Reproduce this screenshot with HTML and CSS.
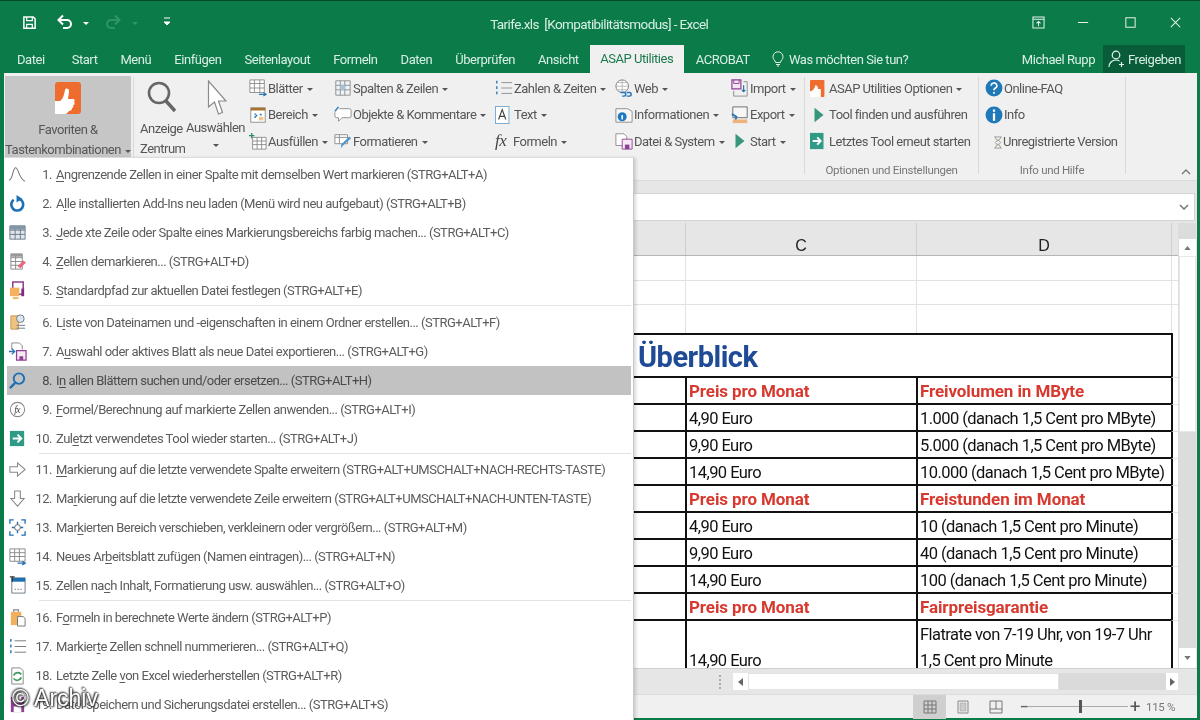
FILE: index.html
```html
<!DOCTYPE html>
<html lang="de">
<head>
<meta charset="utf-8">
<title>Tarife.xls - Excel</title>
<link rel="stylesheet" href="styles.css">
</head>
<body>
<div class="app">
  <header class="titlebar">
    <div class="qat">
      <svg class="qi save" viewBox="0 0 16 16"><path d="M2 2h10l2 2v10H2z" fill="none" stroke="#fff" stroke-width="1.600"/><path d="M5 2v4h6V2" fill="none" stroke="#fff" stroke-width="1.300"/><path d="M5 14v-4h6v4" fill="none" stroke="#fff" stroke-width="1.300"/></svg>
      <svg class="qi undo" viewBox="0 0 18 16"><path d="M3 6h8a4 4 0 0 1 0 8H7" fill="none" stroke="#fff" stroke-width="2"/><path d="M7 1.500 2.500 6 7 10.500" fill="none" stroke="#fff" stroke-width="2"/></svg>
      <span class="caret white"></span>
      <svg class="qi redo" viewBox="0 0 18 16"><path d="M15 6H7a4 4 0 0 0 0 8h4" fill="none" stroke="#2f9468" stroke-width="2"/><path d="M11 1.500 15.500 6 11 10.500" fill="none" stroke="#2f9468" stroke-width="2"/></svg>
      <span class="caret dim"></span>
      <svg class="qi more" viewBox="0 0 8 10"><path d="M1 1h6M1 5h6l-3 3z" fill="#fff" stroke="#fff"/></svg>
    </div>
    <div class="doc">Tarife.xls&nbsp; [Kompatibilitätsmodus] - Excel</div>
    <div class="win">
      <svg class="wi w1" viewBox="0 0 14 14"><path d="M1 1h12v12H1zM1 3.500h12M7 11V6M4.800 8 7 5.800 9.200 8" fill="none" stroke="#e4f2ea" stroke-width="1.100"/></svg>
      <svg class="wi w2" viewBox="0 0 14 14"><path d="M1 7h11" stroke="#e4f2ea" stroke-width="1.100"/></svg>
      <svg class="wi w3" viewBox="0 0 14 14"><path d="M2 2h10v10H2z" fill="none" stroke="#e4f2ea" stroke-width="1.100"/></svg>
      <svg class="wi w4" viewBox="0 0 14 14"><path d="M2 2l10 10M12 2 2 12" stroke="#e4f2ea" stroke-width="1.100"/></svg>
    </div>
  </header>
  <nav class="tabs">
    <span class="tab t-datei">Datei</span>
    <span class="tab">Start</span>
    <span class="tab">Menü</span>
    <span class="tab">Einfügen</span>
    <span class="tab">Seitenlayout</span>
    <span class="tab">Formeln</span>
    <span class="tab">Daten</span>
    <span class="tab">Überprüfen</span>
    <span class="tab t-ansicht">Ansicht</span>
    <span class="tab active">ASAP Utilities</span>
    <span class="tab t-acro">ACROBAT</span>
    <span class="tell">
      <svg class="bulb" viewBox="0 0 12 16"><path d="M3.500 11.500C3 9 1 8.500 1 5.800a5 5 0 0 1 10 0c0 2.700-2 3.200-2.500 5.700zM4 13.500h4M5 15h2" fill="none" stroke="#e4f2ea" stroke-width="1"/></svg>
      Was möchten Sie tun?
    </span>
    <span class="user">Michael Rupp</span>
    <span class="share">
      <svg class="shi" viewBox="0 0 18 18"><circle cx="8" cy="5" r="3.800" fill="none" stroke="#e4f2ea" stroke-width="1.200"/><path d="M1 17c0-4 3-7 7-7 1.500 0 2.500.4 3.500 1M13.500 12v5M11 14.500h5" fill="none" stroke="#e4f2ea" stroke-width="1.200"/></svg>
      Freigeben
    </span>
  </nav>

  <section class="ribbon">
    <div class="fav">
      <svg class="fav-ic" viewBox="0 0 26 32"><rect width="26" height="32" rx="3" fill="#ee6c2d"/><path d="M0 32V19h5c3-2 4-6 5-11 .5-2 4-2 4 1 0 3-1 6-1 8h5c2 0 2 2 1 3 1 1 1 3-1 3 1 1 0 3-1 3 0 2-1 3-3 3l-3 3H0z" fill="#fff"/></svg>
      <span class="big-l">Favoriten &amp;</span>
      <span class="big-l">Tastenkombinationen<i class="caret"></i></span>
    </div>
    <div class="rsep"></div>
    <div class="group g-main">
      <div class="bigbtn b-anz">
        <svg class="mag" viewBox="0 0 30 32"><circle cx="12" cy="12" r="10" fill="none" stroke="#666" stroke-width="2.600"/><path d="M19 20l9 10" stroke="#666" stroke-width="3.400"/></svg>
        <span class="big-l">Anzeige</span><span class="big-l">Zentrum</span>
      </div>
      <div class="bigbtn b-aus">
        <svg class="cur" viewBox="0 0 20 36"><path d="M1.500 1v26l6-5 4 12 4-1.500-4-11.500H19z" fill="#fff" stroke="#8a8a8a" stroke-width="1.200"/></svg>
        <span class="big-l">Auswählen</span><i class="caret solo"></i>
      </div>
      <div class="rcol c1">
        <div class="ri"><svg class="ic" viewBox="0 0 20 20"><path d="M1 1h16v14H1zM1 5h16M1 10h16M6 1v14M12 1v14" fill="#fff" stroke="#8a8a8a"/><path d="M11 17h8M16 15l3 2-3 2" fill="none" stroke="#2b78b5" stroke-width="1.400"/></svg>Blätter<i class="caret"></i></div>
        <div class="ri"><svg class="ic" viewBox="0 0 20 20"><rect x="2" y="2" width="16" height="16" fill="#fff" stroke="#8a8a8a"/><path d="M2 2h16v3H2z" fill="#a9722d"/><path d="M6 13l3-3M12 9l2 1M6 9h2" stroke="#2b78b5" stroke-width="1.600"/><path d="M11 12h5v4h-5z" fill="#f0c68d"/></svg>Bereich<i class="caret"></i></div>
        <div class="ri"><svg class="ic" viewBox="0 0 20 20"><path d="M4 6h15v13H4zM4 10h15M4 14h15M9 6v13M14 6v13" fill="#fff" stroke="#8a8a8a"/><path d="M3 1v6M0 4h6" stroke="#2a8f62" stroke-width="1.500"/></svg>Ausfüllen<i class="caret"></i></div>
      </div>
      <div class="rcol c2">
        <div class="ri"><svg class="ic" viewBox="0 0 20 20"><path d="M2 2h16v16H2zM2 7h16M2 12h16M7 2v16M12 2v16" fill="#eef3f8" stroke="#8a8a8a"/><path d="M7 7h5v5H7z" fill="#a8c3dd"/></svg>Spalten &amp; Zeilen<i class="caret"></i></div>
        <div class="ri"><svg class="ic" viewBox="0 0 20 20"><path d="M6 3h11a2 2 0 0 1 2 2v6a2 2 0 0 1-2 2H9l-4 4v-4H3a2 2 0 0 1-2-2V7" fill="#fff" stroke="#8a8a8a"/><path d="M1 6l4-5" stroke="#2b78b5" stroke-width="1.600"/></svg>Objekte &amp; Kommentare<i class="caret"></i></div>
        <div class="ri"><svg class="ic" viewBox="0 0 20 20"><path d="M1 3h14v10H1zM1 6h14M6 3v10" fill="#fff" stroke="#8a8a8a"/><path d="M8 14l9-9 2 2-9 8-2 3z" fill="#4c94cf"/></svg>Formatieren<i class="caret"></i></div>
      </div>
      <div class="rcol c3">
        <div class="ri"><svg class="ic" viewBox="0 0 20 20"><path d="M7 4h12M7 10h12M7 16h12" stroke="#8a8a8a"/><path d="M2 2v3M2 8v3M2 14v3" stroke="#2b78b5" stroke-width="1.500"/></svg>Zahlen &amp; Zeiten<i class="caret"></i></div>
        <div class="ri"><svg class="ic" viewBox="0 0 20 20"><rect x=".5" y=".5" width="15" height="19" fill="#fff" stroke="#6fa5cf"/><path d="M4 15 8 4l4 11M5.500 11.500h5" fill="none" stroke="#444" stroke-width="1.300"/></svg>Text<i class="caret"></i></div>
        <div class="ri"><span class="fx">fx</span>Formeln<i class="caret"></i></div>
      </div>
      <div class="rcol c4">
        <div class="ri"><svg class="ic" viewBox="0 0 20 20"><circle cx="8" cy="8" r="7" fill="#fff" stroke="#777"/><path d="M1 8h14M8 1v14M3 4h10M3 12h10" stroke="#999" stroke-width=".7"/><path d="M6 15h4a2 2 0 0 1 0 4H8M13 19h3a2 2 0 0 0 0-4h-3" fill="none" stroke="#2474b8" stroke-width="1.600"/></svg>Web<i class="caret"></i></div>
        <div class="ri"><svg class="ic" viewBox="0 0 20 20"><path d="M1 3h13l5 3v12H1z" fill="#f6f6f6" stroke="#8a8a8a"/><circle cx="8" cy="12" r="5" fill="#1f78c1"/><path d="M8 10v5" stroke="#fff" stroke-width="1.700"/></svg>Informationen<i class="caret"></i></div>
        <div class="ri"><svg class="ic" viewBox="0 0 20 20"><path d="M1 2h9l3 3v10H1z" fill="#fff" stroke="#8a8a8a"/><path d="M8 8h11v11H8z" fill="#f5e9f4" stroke="#8f3f94"/><path d="M11 14h5v5h-5z" fill="#8f3f94"/></svg>Datei &amp; System<i class="caret"></i></div>
      </div>
      <div class="rcol c5">
        <div class="ri"><svg class="ic" viewBox="0 0 20 20"><path d="M1 1h10v10H1z" fill="#f2e6f2" stroke="#8f3f94" stroke-width="1.300"/><path d="M3 1v4h6V1" fill="none" stroke="#8f3f94"/><path d="M3 13v6h15V3h-4" fill="none" stroke="#8a8a8a"/><path d="M14 7v7M12 12l2 2 2-2" fill="none" stroke="#2474b8" stroke-width="1.300"/></svg>Import<i class="caret"></i></div>
        <div class="ri"><svg class="ic" viewBox="0 0 20 20"><path d="M2 1h16v12H2z" fill="#f6f6f6" stroke="#666"/><path d="M1 9l5 3-1 4" fill="none" stroke="#2474b8" stroke-width="2"/><path d="M2 15h16v4H2z" fill="#f0b27c"/></svg>Export<i class="caret"></i></div>
        <div class="ri"><svg class="ic" viewBox="0 0 20 20"><path d="M5 2l10 8-10 8z" fill="#38967a"/></svg>Start<i class="caret"></i></div>
      </div>
    </div>
    <div class="rsep"></div>
    <div class="group g-opt">
      <div class="rcol">
        <div class="ri"><svg class="ic" viewBox="0 0 20 20"><rect y="1" width="16" height="19" rx="1" fill="#ee6c2d"/><path d="M0 20v-6c3-1 5-3 6-7 2 0 3 2 3 4h3v9z" fill="#fff"/></svg>ASAP Utilities Optionen<i class="caret"></i></div>
        <div class="ri"><svg class="ic" viewBox="0 0 20 20"><path d="M5 2l10 8-10 8z" fill="#38967a"/></svg>Tool finden und ausführen</div>
        <div class="ri"><svg class="ic" viewBox="0 0 20 20"><rect y="1" width="15" height="18" fill="#2f9b86"/><path d="M3 10h8M8 6l4 4-4 4" fill="none" stroke="#fff" stroke-width="2"/></svg>Letztes Tool erneut starten</div>
      </div>
      <div class="glabel">Optionen und Einstellungen</div>
    </div>
    <div class="rsep"></div>
    <div class="group g-info">
      <div class="rcol">
        <div class="ri"><svg class="ic" viewBox="0 0 16 16"><circle cx="8" cy="8" r="7.500" fill="#1f78b8"/><path d="M5.500 6a2.500 2.500 0 1 1 3.500 2.300c-.7.400-1 .8-1 1.700M8 11.500v1.500" fill="none" stroke="#fff" stroke-width="1.500"/></svg>Online-FAQ</div>
        <div class="ri"><svg class="ic" viewBox="0 0 16 16"><circle cx="8" cy="8" r="7.500" fill="#1f78b8"/><path d="M8 6.500V13M8 3v2" stroke="#fff" stroke-width="2"/></svg>Info</div>
        <div class="ri"><svg class="ic hour" viewBox="0 0 10 14"><path d="M1 1h8M1 13h8M2 1c0 4 6 4 6 6s-6 2-6 6M8 1c0 4-6 4-6 6s6 2 6 6" fill="#f3eecf" stroke="#999"/></svg>Unregistrierte Version</div>
      </div>
      <div class="glabel">Info und Hilfe</div>
    </div>
    <div class="rsep"></div>
    <svg class="collapse" viewBox="0 0 10 6"><path d="M1 5l4-4 4 4" fill="none" stroke="#777" stroke-width="1.400"/></svg>
  </section>

  <div class="fbar">
    <div class="fbox"><svg class="chev" viewBox="0 0 10 6"><path d="M1 1l4 4 4-4" fill="none" stroke="#777" stroke-width="1.500"/></svg></div>
  </div>

  <div class="sheetwrap">
    <main class="sheet">
      <div class="row hdr"><div></div><div class="hc">C</div><div class="hc">D</div><div></div></div>
      <div class="row blank b25"><div></div><div></div><div></div><div></div></div>
      <div class="row blank b24"><div></div><div></div><div></div><div></div></div>
      <div class="row blank b29"><div></div><div></div><div></div><div></div></div>
      <div class="row tr title"><div class="span3"><span class="ueber">Überblick</span></div><div></div></div>
      <div class="row tr red"><div></div><div>Preis pro Monat</div><div>Freivolumen in MByte</div><div></div></div>
      <div class="row tr"><div></div><div>4,90 Euro</div><div>1.000 (danach 1,5 Cent pro MByte)</div><div></div></div>
      <div class="row tr"><div></div><div>9,90 Euro</div><div>5.000 (danach 1,5 Cent pro MByte)</div><div></div></div>
      <div class="row tr"><div></div><div>14,90 Euro</div><div>10.000 (danach 1,5 Cent pro MByte)</div><div></div></div>
      <div class="row tr red"><div></div><div>Preis pro Monat</div><div>Freistunden im Monat</div><div></div></div>
      <div class="row tr"><div></div><div>4,90 Euro</div><div>10 (danach 1,5 Cent pro Minute)</div><div></div></div>
      <div class="row tr"><div></div><div>9,90 Euro</div><div>40 (danach 1,5 Cent pro Minute)</div><div></div></div>
      <div class="row tr"><div></div><div>14,90 Euro</div><div>100 (danach 1,5 Cent pro Minute)</div><div></div></div>
      <div class="row tr red"><div></div><div>Preis pro Monat</div><div>Fairpreisgarantie</div><div></div></div>
      <div class="row tr tall"><div></div><div class="bot">14,90 Euro</div><div class="wrap">Flatrate von 7-19 Uhr, von 19-7 Uhr<br>1,5 Cent pro Minute</div><div></div></div>
    </main>
    <aside class="vscroll">
      <div class="sbtn"><svg viewBox="0 0 8 5"><path d="M4 0l4 5H0z" fill="#777"/></svg></div>
      <div class="vthumb"></div>
      <div class="sbtn sdown"><svg viewBox="0 0 8 5"><path d="M4 5 8 0H0z" fill="#777"/></svg></div>
    </aside>
  </div>

  <div class="hscroll">
    <span class="dots"></span>
    <div class="hbtn"><svg viewBox="0 0 5 8"><path d="M0 4l5-4v8z" fill="#666"/></svg></div>
    <div class="hthumb"></div>
    <div class="htrack"></div>
    <div class="hbtn"><svg viewBox="0 0 5 8"><path d="M5 4 0 0v8z" fill="#666"/></svg></div>
  </div>

  <footer class="status">
    <span class="vbtn on"><svg viewBox="0 0 14 14"><path d="M1 1h12v12H1zM1 5h12M1 9h12M5 1v12M9 1v12" fill="none" stroke="#777"/></svg></span>
    <span class="vbtn"><svg viewBox="0 0 14 14"><path d="M2 1h10v12H2z" fill="none" stroke="#888"/><path d="M4 3h6v8H4z" fill="#ccc" stroke="#999" stroke-width=".5"/></svg></span>
    <span class="vbtn"><svg viewBox="0 0 14 14"><path d="M1 1h12v12H1zM1 9h12M7 1v8" fill="none" stroke="#777"/></svg></span>
    <span class="zm">–</span>
    <span class="slider"><i></i></span>
    <span class="zp">+</span>
    <span class="pct">115 %</span>
  </footer>
</div>

<div class="menu">
  <div class="item"><svg class="mi" viewBox="0 0 20 20"><path d="M1 16c4 0 4-13 7-13s4 13 10 14" fill="none" stroke="#777" stroke-width="1.100"/></svg><span class="n">1.</span><span><u>A</u>ngrenzende Zellen in einer Spalte mit demselben Wert markieren (STRG+ALT+A)</span></div>
  <div class="item"><svg class="mi" viewBox="0 0 20 20"><path d="M12 5.200A6.300 6.300 0 1 1 6 6" fill="none" stroke="#1f6fb5" stroke-width="2.800"/><path d="M9 1v8l6-4z" fill="#1f6fb5"/></svg><span class="n">2.</span><span>A<u>l</u>le installierten Add-Ins neu laden (Menü wird neu aufgebaut) (STRG+ALT+B)</span></div>
  <div class="item"><svg class="mi" viewBox="0 0 20 20"><path d="M2 3h16v14H2z" fill="#dfe6ee" stroke="#6b7a88"/><path d="M2 7.500h16M2 12h16M7.500 3v14M13 3v14" stroke="#6b7a88"/><path d="M2 3h16v4H2z" fill="#8596a6"/></svg><span class="n">3.</span><span><u>J</u>ede xte Zeile oder Spalte eines Markierungsbereichs farbig machen... (STRG+ALT+C)</span></div>
  <div class="item"><svg class="mi" viewBox="0 0 20 20"><path d="M3 2h12v16H3zM3 6h12M3 10h12M3 14h12M8 2v16" fill="#fff" stroke="#8a8a8a"/><path d="M3 2h12v3H3z" fill="#9a9a9a"/><path d="M10 15l6-6 3 2-6 6z" fill="#e8697a"/></svg><span class="n">4.</span><span><u>Z</u>ellen demarkieren... (STRG+ALT+D)</span></div>
  <div class="item"><svg class="mi" viewBox="0 0 20 20"><path d="M5 1h11v13H5z" fill="#fff" stroke="#8f3f94" stroke-width="1.600"/><path d="M2 7h10v9H2z" fill="#f4b25f"/><path d="M14 8h3v8h-3z" fill="#7c2f82"/><path d="M5 17h6v2H5z" fill="#f4b25f"/></svg><span class="n">5.</span><span><u>S</u>tandardpfad zur aktuellen Datei festlegen (STRG+ALT+E)</span></div>
  <div class="msep"></div>
  <div class="item"><svg class="mi" viewBox="0 0 20 20"><path d="M3 3h8v14H3z" fill="#f0c27f" stroke="#c49a54"/><circle cx="13" cy="6" r="4" fill="#dbe6ee" stroke="#6b7a88"/><path d="M9 13h9M9 16h9" stroke="#6b7a88"/></svg><span class="n">6.</span><span>L<u>i</u>ste von Dateinamen und -eigenschaften in einem Ordner erstellen... (STRG+ALT+F)</span></div>
  <div class="item"><svg class="mi" viewBox="0 0 20 20"><path d="M4 8V1h8l3 3v4" fill="#fff" stroke="#8a8a8a"/><path d="M9 9h10v10H9z" fill="#f5e9f4" stroke="#8f3f94" stroke-width="1.300"/><path d="M12 15h4v4h-4z" fill="#8f3f94"/><path d="M1 10h6M4 7l3 3-3 3" fill="none" stroke="#2474b8" stroke-width="1.400"/></svg><span class="n">7.</span><span>A<u>u</u>swahl oder aktives Blatt als neue Datei exportieren... (STRG+ALT+G)</span></div>
  <div class="item hot"><svg class="mi" viewBox="0 0 20 20"><circle cx="11.500" cy="8" r="5.500" fill="none" stroke="#1f6fb5" stroke-width="2"/><path d="M7.500 12.500 2 18" stroke="#1f6fb5" stroke-width="2.400"/></svg><span class="n">8.</span><span>I<u>n</u> allen Blättern suchen und/oder ersetzen... (STRG+ALT+H)</span></div>
  <div class="item"><svg class="mi" viewBox="0 0 20 20"><circle cx="10" cy="10" r="7.500" fill="#fff" stroke="#888" stroke-width="1.100"/><text class="mfx" x="6.500" y="14">fx</text></svg><span class="n">9.</span><span><u>F</u>ormel/Berechnung auf markierte Zellen anwenden... (STRG+ALT+I)</span></div>
  <div class="item"><svg class="mi" viewBox="0 0 20 20"><rect x="2" y="2" width="15" height="16" fill="#2f9b86"/><path d="M5 10h8M10 6l4 4-4 4" fill="none" stroke="#fff" stroke-width="2"/></svg><span class="n">10.</span><span>Zul<u>e</u>tzt verwendetes Tool wieder starten... (STRG+ALT+J)</span></div>
  <div class="msep"></div>
  <div class="item"><svg class="mi" viewBox="0 0 20 20"><path d="M2 7h8V3l8 7-8 7v-4H2z" fill="#fff" stroke="#888" stroke-width="1.100"/></svg><span class="n">11.</span><span><u>M</u>arkierung auf die letzte verwendete Spalte erweitern (STRG+ALT+UMSCHALT+NACH-RECHTS-TASTE)</span></div>
  <div class="item"><svg class="mi" viewBox="0 0 20 20"><path d="M7 2v8H3l7 8 7-8h-4V2z" fill="#fff" stroke="#888" stroke-width="1.100"/></svg><span class="n">12.</span><span>Ma<u>r</u>kierung auf die letzte verwendete Zeile erweitern (STRG+ALT+UMSCHALT+NACH-UNTEN-TASTE)</span></div>
  <div class="item"><svg class="mi" viewBox="0 0 20 20"><path d="M2 6V2h4M14 2h4v4M18 14v4h-4M6 18H2v-4" fill="none" stroke="#1f6fb5" stroke-width="1.400"/><path d="M10 4v12M4 10h12" stroke="#1f6fb5" stroke-width="1.400"/><circle cx="10" cy="10" r="3" fill="#fff" stroke="#666"/></svg><span class="n">13.</span><span>Mar<u>k</u>ierten Bereich verschieben, verkleinern oder vergrößern... (STRG+ALT+M)</span></div>
  <div class="item"><svg class="mi" viewBox="0 0 20 20"><path d="M2 2h16v13H2zM2 6h16M2 10h16M7 2v13M12 2v13" fill="#fff" stroke="#8a8a8a"/><path d="M10 17h9M15 15l3 2-3 2" fill="none" stroke="#2474b8" stroke-width="1.400"/></svg><span class="n">14.</span><span>Neues Ar<u>b</u>eitsblatt zufügen (Namen eintragen)... (STRG+ALT+N)</span></div>
  <div class="item"><svg class="mi" viewBox="0 0 20 20"><path d="M4 2h14v16H4z" fill="#fff" stroke="#6b7a88"/><path d="M4 2h14v4H4z" fill="#1f6fb5"/><path d="M2 1h5M4.500 1v5" stroke="#333" stroke-width="1.300"/><path d="M7 14h8" stroke="#777" stroke-dasharray="1.500 1.500"/></svg><span class="n">15.</span><span>Zellen na<u>c</u>h Inhalt, Formatierung usw. auswählen... (STRG+ALT+O)</span></div>
  <div class="msep"></div>
  <div class="item"><svg class="mi" viewBox="0 0 20 20"><path d="M3 4h11v14H3z" fill="#f2b05e"/><path d="M6 4V2h5v2" fill="none" stroke="#888" stroke-width="1.300"/><path d="M10 9h6l2 2v8h-8z" fill="#fff" stroke="#777"/></svg><span class="n">16.</span><span>F<u>o</u>rmeln in berechnete Werte ändern (STRG+ALT+P)</span></div>
  <div class="item"><svg class="mi" viewBox="0 0 20 20"><path d="M7 4h12M7 10h12M7 16h12" stroke="#777"/><path d="M3 2v3M3 8v3M3 14v3" stroke="#2474b8" stroke-width="1.500"/></svg><span class="n">17.</span><span>Markier<u>t</u>e Zellen schnell nummerieren... (STRG+ALT+Q)</span></div>
  <div class="item"><svg class="mi" viewBox="0 0 20 20"><path d="M4 2h9l3 3v14H4z" fill="#fff" stroke="#888"/><path d="M14 9a4.500 4.500 0 0 0-8 1M6 13a4.500 4.500 0 0 0 8-1" fill="none" stroke="#3a9b59" stroke-width="1.800"/></svg><span class="n">18.</span><span>Letzte Zelle <u>v</u>on Excel wiederherstellen (STRG+ALT+R)</span></div>
  <div class="item"><svg class="mi" viewBox="0 0 20 20"><path d="M3 2h14v16H3z" fill="#8f3f94"/><path d="M6 2v6h8V2M6 18v-6h8v6" fill="#fff"/></svg><span class="n">19.</span><span>Datei speichern und Sicherungsdatei erstellen... (STRG+ALT+S)</span></div>
</div>
<div class="mark">© Archiv</div>
</body>
</html>
```
FILE: styles.css
```css
* { box-sizing: border-box; }
html, body { margin: 0; height: 100%; overflow: hidden; }
body {
  width: 1200px; height: 720px; position: relative;
  font-family: Roboto, "Liberation Sans", sans-serif;
  font-size: 13px; letter-spacing: -.5px; color: #565656;
  background: #0b7b4a;
}
.app { display: flex; flex-direction: column; height: 720px; padding: 1px 3px 3px 2px; background: #0b7b4a; border-top: 1px solid #07482c; filter: blur(.35px); }

/* title bar */
.titlebar { height: 43px; display: flex; align-items: center; color: #d9efe3; flex: none; position: relative; }
.qat { display: flex; align-items: center; width: 440px; padding: 0 0 3px 20px; }
.qi { display: block; }
.save { width: 15px; height: 15px; margin-right: 19px; }
.undo { width: 18px; height: 16px; margin-right: 5px; }
.redo { width: 18px; height: 16px; margin: 0 6px 0 15px; }
.more { width: 8px; height: 10px; margin-left: 25px; }
.doc { width: 360px; padding-left: 50px; font-size: 13.500px; letter-spacing: -.6px; white-space: nowrap; }
.win { display: flex; margin-left: auto; align-items: center; height: 100%; position: relative; width: 400px; padding-bottom: 3px; }
.wi { height: 13px; width: 13px; display: block; }
.w1 { margin-left: 233px; }
.w2 { margin-left: 32px; }
.w3 { margin-left: 34px; }
.w4 { margin-left: 32px; }

/* tabs */
.tabs { height: 28px; display: flex; align-items: center; color: #d9efe3; flex: none; padding: 0 12px 0 15px; white-space: nowrap; letter-spacing: -.45px; }
.tab { margin-right: 23px; }
.t-datei { margin-right: 27px; }
.t-ansicht { margin-right: 11px; }
.tab.active { background: #f0f0f0; color: #1c7a4f; height: 28px; line-height: 28px; width: 94px; text-align: center; margin-right: 12px; }
.t-acro { margin-right: 22px; }
.tell { display: flex; align-items: center; gap: 5px; }
.bulb { width: 12px; height: 16px; }
.user { margin: 0 8px 0 auto; }
.share { display: flex; align-items: center; gap: 2px; height: 28px; background: #085d38; width: 82px; padding-left: 5px; }
.shi { width: 18px; height: 18px; }

/* ribbon */
.ribbon { height: 108px; background: #f0f0f0; display: flex; flex: none; margin-left: 2px; position: relative; border-bottom: 1px solid #dadada; }
.fav { width: 126px; height: 81px; margin: 3px 0 0 1px; background: #c6c6c6; display: flex; flex-direction: column; align-items: center; }
.fav-ic { width: 26px; height: 32px; margin: 6px 0 6px; flex: none; }
.big-l { display: block; line-height: 20px; height: 20px; white-space: nowrap; }
.rsep { width: 1px; background: #d9d9d9; margin: 4px 0 6px; flex: none; }
.fav + .rsep { margin-left: 2px; }
.group { position: relative; }
.g-main { width: 670px; display: flex; }
.bigbtn { display: flex; flex-direction: column; }
.b-anz { width: 52px; padding: 8px 0 0 6px; }
.mag { width: 30px; height: 32px; margin: 0 0 6px 7px; display: block; }
.b-aus { width: 61px; padding-top: 7px; }
.cur { width: 20px; height: 36px; margin: 0 0 2px 21px; display: block; }
.solo { margin: 6px 0 0 27px !important; }
.rcol { display: flex; flex-direction: column; padding-top: 2px; }
.ri { height: 26.500px; display: flex; align-items: center; white-space: nowrap; }
.ic { width: 18px; height: 18px; flex: none; margin-right: 1px; }
.c1 { width: 85px; margin-left: 2px; }
.c2 { width: 161px; }
.c3 { width: 120px; }
.c4 { width: 116px; }
.c5 { width: 70px; }
.fx { font-family: "Liberation Serif", serif; font-style: italic; font-size: 17px; width: 18px; color: #444; }
.g-opt { width: 173px; padding-left: 5px; }
.g-info { width: 146px; padding-left: 6px; }
.hour { width: 10px; height: 13px; margin: 3px 0 0 8px; }
.glabel { position: absolute; left: 0; right: 0; bottom: 3px; text-align: center; font-size: 11.500px; color: #777; letter-spacing: -.3px; }
.collapse { position: absolute; right: 6px; bottom: 5px; width: 10px; height: 6px; }

.caret { display: inline-block; width: 0; height: 0; border: 3px solid transparent; border-top: 3px solid #555; border-bottom: 0; margin: 2px 0 0 4px; vertical-align: middle; flex: none; }
.caret.white { border-top-color: #fff; }
.caret.dim { border-top-color: #2f9468; }

/* formula bar */
.fbar { height: 42px; flex: none; background: #e6e6e6; margin-left: 2px; padding: 12px 2px 1px 0; }
.fbox { height: 28px; background: #fff; border: 1px solid #d4d4d4; display: flex; align-items: center; justify-content: flex-end; padding-right: 5px; }
.chev { width: 10px; height: 6px; }

/* sheet */
.sheetwrap { flex: none; height: 445px; display: flex; margin-left: 2px; background: #e6e6e6; }
.sheet { width: 1174px; height: 445px; overflow: hidden; background: #fff; font-size: 16.500px; letter-spacing: -.55px; color: #111; }
.row { display: grid; grid-template-columns: 681px 231px 255px 7px; }
.hdr { height: 33px; background: #e6e6e6; border-bottom: 1px solid #b5b5b5; }
.hc { text-align: center; border-left: 1px solid #cfcfcf; line-height: 46px; height: 32px; font-family: "Liberation Sans", sans-serif; font-size: 16px; letter-spacing: 0; color: #222; }
.hdr > :last-child { border-left: 1px solid #cfcfcf; }
.blank > div { border-bottom: 1px solid #e2e2e2; border-left: 1px solid #e2e2e2; }
.b25 { height: 25px; }
.b24 { height: 24px; }
.b29 { height: 28px; }
.b29 > div { border-bottom: 0; }
.tr { height: 27px; line-height: 27px; }
.tr > div { border-bottom: 2px solid #111; padding-left: 2px; white-space: nowrap; overflow: hidden; }
.tr > div:nth-child(2), .tr > div:nth-child(3) { border-left: 2px solid #111; }
.tr > div:last-child { border-left: 2px solid #111; border-bottom: 1px solid #e2e2e2; padding: 0; }
.title { height: 45px; }
.span3 { grid-column: 1 / span 3; height: 45px; border-top: 2px solid #111; border-left: 0 !important; padding-left: 634px !important; }
.title > div:last-child { grid-column: 4; }
.ueber { display: block; height: 41px; line-height: 45px; font-size: 29px; font-weight: 700; color: #1f4a96; letter-spacing: -.5px; }
.red { color: #d8392f; font-weight: 700; font-size: 17px; letter-spacing: -.1px; line-height: 26px; }
.tall { height: 60px; }
.tall > div { line-height: 26px; }
.wrap { padding-top: 1px; }
.bot { padding-top: 27px; }

.vscroll { width: 18px; padding-left: 1px; background: #dcdcdc; display: flex; flex-direction: column; height: 445px; }
.sbtn { height: 17px; background: #fff; display: flex; align-items: center; justify-content: center; margin-top: 16px; flex: none; }
.sbtn svg { width: 7px; height: 4px; }
.vthumb { height: 176px; background: #fff; border: 1px solid #e8e8e8; flex: none; }
.sdown { margin-top: auto; height: 20px; }

.hscroll { height: 26px; flex: none; margin-left: 2px; background: #e6e6e6; display: flex; align-items: center; padding-left: 715px; border-top: 1px solid #cfcfcf; }
.dots { width: 2px; height: 14px; border-left: 2px dotted #aaa; margin-right: 12px; }
.hbtn { width: 15px; height: 17px; background: #fff; display: flex; align-items: center; justify-content: center; flex: none; }
.hbtn:last-child { width: 12px; }
.hbtn svg { width: 5px; height: 8px; }
.hthumb { width: 311px; height: 17px; background: #fff; border: 1px solid #e2e2e2; }
.htrack { width: 107px; height: 17px; background: #dadada; }

.status { height: 24px; flex: none; margin-left: 2px; background: #f0f0f0; display: flex; align-items: center; padding-left: 909px; border-top: 1px solid #dcdcdc; color: #666; }
.vbtn { width: 33px; height: 24px; display: flex; align-items: center; justify-content: center; }
.vbtn.on { background: #cfcfcf; }
.vbtn svg { width: 14px; height: 14px; }
.zm { margin-left: 8px; width: 8px; font-weight: 700; }
.slider { width: 100px; height: 1px; background: #aaa; position: relative; }
.slider i { position: absolute; left: 51px; top: -6px; width: 3px; height: 13px; background: #555; }
.zp { font-size: 19px; width: 14px; line-height: 20px; text-align: center; color: #555; }
.pct { margin-left: 4px; font-size: 11.500px; color: #777; white-space: nowrap; letter-spacing: -.3px; }

/* dropdown */
.menu { position: absolute; left: 4px; top: 157px; width: 630px; height: 563px; background: #fff; padding: 2px 2px 0 3px; border-right: 1px solid #c8c8c8; border-top: 1px solid #dcdcdc; overflow: hidden; color: #5c5c5c; box-shadow: 2px 1px 3px rgba(0,0,0,.15); filter: blur(.35px); }
.item { height: 29px; display: flex; align-items: center; white-space: nowrap; padding-left: 1px; }
.item.hot { background: #c2c2c2; color: #4a4a4a; }
.item u { text-underline-offset: 2px; }
.mi { width: 19px; height: 19px; flex: none; }
.mfx { font-family: "Liberation Serif", serif; font-style: italic; font-size: 10px; fill: #444; }
.n { width: 18px; margin: 0 4px 0 7px; text-align: right; flex: none; }
.msep { height: 2.500px; margin-left: 32px; border-top: 1px solid #e3e3e3; }

.mark { position: absolute; left: 12px; top: 685px; font-family: "Liberation Sans", sans-serif; font-size: 23px; letter-spacing: 0; color: #fff; text-shadow: 0 0 2px #222, 1px 1px 2px #222, -1px -1px 2px #333; white-space: nowrap; filter: blur(.35px); }
```
